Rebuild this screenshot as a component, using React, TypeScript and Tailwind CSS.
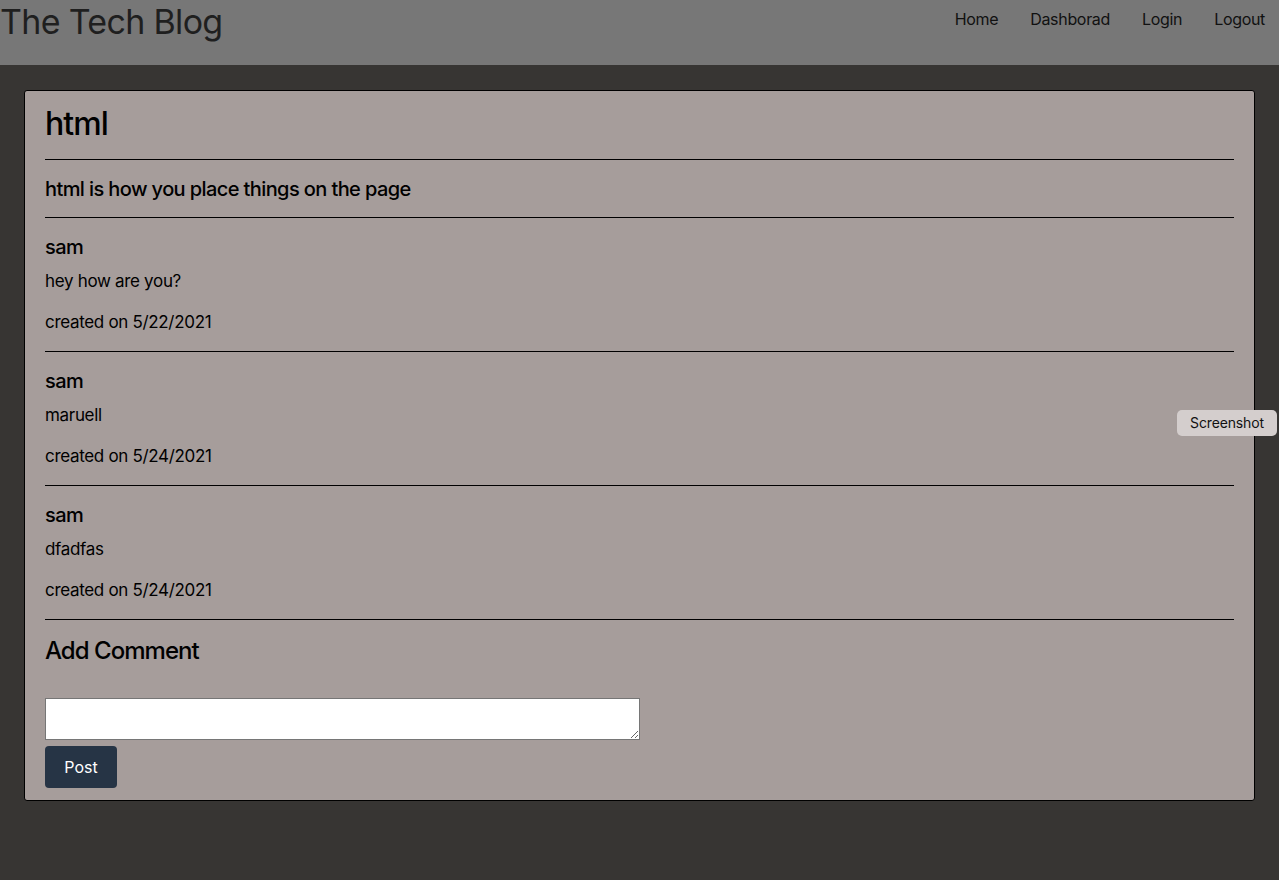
import React from "react";

type Comment = {
  user: string;
  body: string;
  date: string;
};

const comments: Comment[] = [
  { user: "sam", body: "hey how are you?", date: "5/22/2021" },
  { user: "sam", body: "maruell", date: "5/24/2021" },
  { user: "sam", body: "dfadfas", date: "5/24/2021" },
];

const navLinks = ["Home", "Dashborad", "Login", "Logout"];

export default function App() {
  return (
    <div
      className="min-h-screen bg-[#373533] text-black"
      style={{ fontFamily: "Inter, 'Noto Sans', sans-serif" }}
    >
      {/* Header */}
      <header className="flex h-[65px] items-start justify-between bg-[#777777]">
        <h1 className="mt-[2px] text-[34px] leading-10 tracking-[-0.02em] text-[#1f1f1f]">
          The Tech Blog
        </h1>
        <nav className="flex gap-8 pr-[14px] pt-[7px] text-base leading-6 tracking-[-0.02em] text-[#111]">
          {navLinks.map((link) => (
            <a key={link} href="#">
              {link}
            </a>
          ))}
        </nav>
      </header>

      {/* Post */}
      <main className="px-6 pt-[25px] pb-20">
        <div className="rounded-[3px] border border-black bg-[#a69d9b] px-5 pt-[13px] pb-3">
          <h2 className="text-[32px] leading-10 font-medium tracking-[-0.03em]">
            html
          </h2>
          <hr className="mt-[15px] border-black" />
          <h3 className="mt-[15px] text-xl leading-7 font-medium tracking-[-0.03em]">
            html is how you place things on the page
          </h3>
          <hr className="mt-[14px] border-black" />

          {comments.map((c, i) => (
            <div key={i}>
              <div className="pt-[15px] pb-[17px] tracking-[-0.02em]">
                <h4 className="text-xl leading-7 font-medium tracking-[-0.03em]">
                  {c.user}
                </h4>
                <p className="mt-2 text-[17px] leading-6">{c.body}</p>
                <p className="mt-[17px] text-[17px] leading-6">
                  created on {c.date}
                </p>
              </div>
              <hr className="border-black" />
            </div>
          ))}

          {/* Add Comment */}
          <h3 className="mt-[15px] text-2xl leading-8 font-medium tracking-[-0.04em]">
            Add Comment
          </h3>
          <form className="mt-[31px]" onSubmit={(e) => e.preventDefault()}>
            <textarea className="block h-[42px] w-[595px] border border-[#767676] bg-white" />
            <button
              type="submit"
              className="mt-[6px] h-[42px] w-[72px] rounded-[4px] bg-[#263445] text-base text-white"
            >
              Post
            </button>
          </form>
        </div>
      </main>

      {/* Floating screenshot button */}
      <button className="fixed top-[410px] right-[2px] h-[26px] w-[100px] rounded-[5px] bg-[#d4cecd] text-sm tracking-[-0.01em] text-[#111]">
        Screenshot
      </button>
    </div>
  );
}
